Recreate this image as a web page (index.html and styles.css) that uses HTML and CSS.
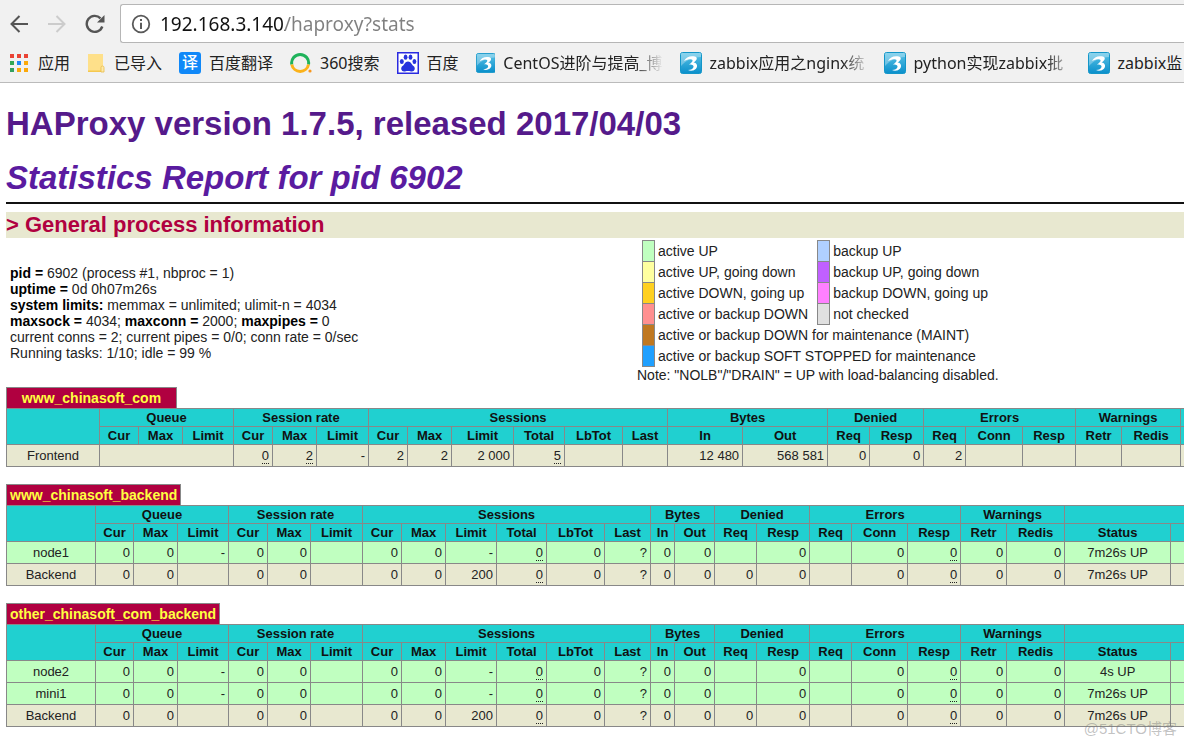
FILE: index.html
```html
<!DOCTYPE html>
<html lang="zh-CN">
<head>
<meta charset="utf-8">
<title>Statistics Report for HAProxy</title>
<link rel="stylesheet" href="styles.css">
</head>
<body>
<svg class="defs" width="0" height="0" aria-hidden="true">
  <defs>
    <linearGradient id="sky" x1="0" y1="0" x2="0" y2="1"><stop offset="0" stop-color="#5cc3e6"/><stop offset="1" stop-color="#0a8fcb"/></linearGradient>
    <symbol id="three" viewBox="0 0 22 22">
      <rect x="0.5" y="0.5" width="21" height="21" rx="2" fill="url(#sky)" stroke="#1496c8"/>
      <path d="M1 1h20v4C14 5 6 8 1 14z" fill="#fff" opacity=".3"/>
      <path d="M4 9C6 5 10 3.500 15 4.500c3 1 2 4-1.500 6 4.500.5 4.500 5 1.500 7-2 1.500-5 1.500-7 .5 3 0 5-1 5.500-3 .3-2-2-2.500-4.500-2.500 2-1.500 4-3 3.500-4.500C11.500 6.500 8 7 4 9z" fill="#fff"/>
    </symbol>
  </defs>
</svg>
<header class="chrome">
  <div class="toolbar">
    <button class="nav" type="button" aria-label="Back"><svg width="20" height="20" viewBox="0 0 20 20" fill="none" stroke="#555" stroke-width="2"><path d="M19 10H2.500M10.500 2l-8 8 8 8"/></svg></button>
    <button class="nav" type="button" aria-label="Forward"><svg width="20" height="20" viewBox="0 0 20 20" fill="none" stroke="#ccc" stroke-width="2"><path d="M1 10h16.500M9.500 2l8 8-8 8"/></svg></button>
    <button class="nav" type="button" aria-label="Reload"><svg width="20" height="20" viewBox="0 0 20 20" fill="none" stroke="#555" stroke-width="2.400"><path d="M17.300 12.500A8 8 0 1 1 15.500 4.300"/><path d="M19.500 1v7.500H12z" fill="#555" stroke="none"/></svg></button>
    <div class="omnibox">
      <svg width="20" height="20" viewBox="0 0 20 20"><circle cx="10" cy="10" r="8.300" fill="none" stroke="#5a5a5a" stroke-width="1.800"/><path d="M9 5h2v2H9zM9 8.800h2V15H9z" fill="#5a5a5a"/></svg>
      <input class="url" type="text" aria-label="Address" value="192.168.3.140/haproxy?stats">
    </div>
  </div>
  <nav class="bookmarks">
    <a class="mark" href="#"><svg width="21" height="22" viewBox="0 0 21 22"><path d="M1 2h4v4H1zM8 2h4v4H8zM15 2h4v4h-4z" fill="#ea4335"/><path d="M1 9h4v4H1z" fill="#34a853"/><path d="M8 9h4v4H8z" fill="#1e88f5"/><path d="M15 9h4v4h-4z" fill="#fba90a"/><path d="M1 16h4v4H1z" fill="#34a060"/><path d="M8 16h4v4H8zM15 16h4v4h-4z" fill="#fba90a"/></svg><span>应用</span></a>
    <a class="mark" href="#"><svg width="19" height="22" viewBox="0 0 19 22"><path d="M1 2h15v13h1v5H1z" fill="#fee08a"/><path d="M1 18.500h13V20H1z" fill="#f5c84f"/><path d="M14 20v-4.500a1.500 1.500 0 0 1 3 0V20z" fill="#fee9a8" stroke="#e9bd4c" stroke-width=".8"/></svg><span>已导入</span></a>
    <a class="mark" href="#"><span class="translate">译</span><span>百度翻译</span></a>
    <a class="mark" href="#"><svg width="22" height="22" viewBox="0 0 22 22" fill="none" stroke-width="3"><path d="M1.800 12.500A8.500 8.500 0 1 1 18.500 12.500" stroke="#1fb35b"/><path d="M1.800 12.500a8.500 8.500 0 0 0 16.700 0" stroke="#fbb21a"/><circle cx="20" cy="19" r="1.600" fill="#f8971d" stroke="none"/></svg><span>360搜索</span></a>
    <a class="mark" href="#"><svg width="22" height="22" viewBox="0 0 22 22"><rect x=".75" y=".75" width="20.500" height="20.500" fill="#fff" stroke="#2a2ae0" stroke-width="1.500"/><g fill="#2733dd"><ellipse cx="4.800" cy="9.500" rx="2" ry="2.500"/><ellipse cx="8.600" cy="5.200" rx="1.900" ry="2.600"/><ellipse cx="13.500" cy="5.200" rx="1.900" ry="2.600"/><ellipse cx="17.400" cy="9.500" rx="1.900" ry="2.500"/><path d="M11 9.500c3 0 3.500 3 5.500 4.500 2.500 2 1 5.500-1.500 5.500-1.500 0-2-.5-4-.5s-2.500.5-4 .5c-2.500 0-4-3.500-1.500-5.500C7.500 12.500 8 9.500 11 9.500z"/></g></svg><span>百度</span></a>
    <a class="mark wide" href="#"><svg width="22" height="22"><use href="#three"/></svg><span class="fade">CentOS进阶与提高_博</span></a>
    <a class="mark wide" href="#"><svg width="22" height="22"><use href="#three"/></svg><span class="fade">zabbix应用之nginx统</span></a>
    <a class="mark wide" href="#"><svg width="22" height="22"><use href="#three"/></svg><span class="fade">python实现zabbix批</span></a>
    <a class="mark wide" href="#"><svg width="22" height="22"><use href="#three"/></svg><span>zabbix监</span></a>
  </nav>
</header>
<main class="page">
  <h1><a href="#">HAProxy version 1.7.5, released 2017/04/03</a></h1>
  <h2><a href="#">Statistics Report for pid 6902</a></h2>
  <hr>
  <h3>&gt; General process information</h3>
  <section class="info">
    <p class="process">
      <b>pid = </b>6902 (process #1, nbproc = 1)<br>
      <b>uptime = </b>0d 0h07m26s<br>
      <b>system limits:</b> memmax = unlimited; ulimit-n = 4034<br>
      <b>maxsock = </b>4034; <b>maxconn = </b>2000; <b>maxpipes = </b>0<br>
      current conns = 2; current pipes = 0/0; conn rate = 0/sec<br>
      Running tasks: 1/10; idle = 99 %
    </p>
    <div class="legend">
      <table class="keys">
        <tr><td class="key up"></td><td>active UP</td><td class="key bup"></td><td>backup UP</td></tr>
        <tr><td class="key falling"></td><td>active UP, going down</td><td class="key bfalling"></td><td>backup UP, going down</td></tr>
        <tr><td class="key rising"></td><td>active DOWN, going up</td><td class="key brising"></td><td>backup DOWN, going up</td></tr>
        <tr><td class="key down"></td><td>active or backup DOWN</td><td class="key nocheck"></td><td>not checked</td></tr>
        <tr><td class="key maint"></td><td colspan="3">active or backup DOWN for maintenance (MAINT)</td></tr>
        <tr><td class="key stopped"></td><td colspan="3">active or backup SOFT STOPPED for maintenance</td></tr>
      </table>
      <p class="note">Note: "NOLB"/"DRAIN" = UP with load-balancing disabled.</p>
    </div>
  </section>

  <table class="stats front">
    <caption><a href="#">www_chinasoft_com</a></caption>
    <colgroup><col class="w93"><col class="w39"><col class="w44"><col class="w51"><col class="w39"><col class="w44"><col class="w52"><col class="w39"><col class="w44"><col class="w62"><col class="w51"><col class="w58"><col class="w45"><col class="w75"><col class="w85"><col class="w42"><col class="w54"><col class="w42"><col class="w57"><col class="w53"><col class="w46"><col class="w59"><col></colgroup>
    <thead>
      <tr><th rowspan="2"></th><th colspan="3">Queue</th><th colspan="3">Session rate</th><th colspan="6">Sessions</th><th colspan="2">Bytes</th><th colspan="2">Denied</th><th colspan="3">Errors</th><th colspan="2">Warnings</th><th></th></tr>
      <tr><th>Cur</th><th>Max</th><th>Limit</th><th>Cur</th><th>Max</th><th>Limit</th><th>Cur</th><th>Max</th><th>Limit</th><th>Total</th><th>LbTot</th><th>Last</th><th>In</th><th>Out</th><th>Req</th><th>Resp</th><th>Req</th><th>Conn</th><th>Resp</th><th>Retr</th><th>Redis</th><th></th></tr>
    </thead>
    <tbody>
      <tr class="total"><td class="ac">Frontend</td><td colspan="3"></td><td><u>0</u></td><td><u>2</u></td><td>-</td><td>2</td><td>2</td><td>2 000</td><td><u>5</u></td><td></td><td></td><td>12 480</td><td>568 581</td><td>0</td><td>0</td><td>2</td><td></td><td></td><td></td><td></td><td></td></tr>
    </tbody>
  </table>

  <table class="stats">
    <caption><a href="#">www_chinasoft_backend</a></caption>
    <colgroup><col class="w89"><col class="w38"><col class="w44"><col class="w51"><col class="w39"><col class="w43"><col class="w52"><col class="w39"><col class="w44"><col class="w51"><col class="w50"><col class="w58"><col class="w46"><col class="w24"><col class="w40"><col class="w42"><col class="w53"><col class="w42"><col class="w56"><col class="w53"><col class="w46"><col class="w58"><col class="w106"><col></colgroup>
    <thead>
      <tr><th rowspan="2"></th><th colspan="3">Queue</th><th colspan="3">Session rate</th><th colspan="6">Sessions</th><th colspan="2">Bytes</th><th colspan="2">Denied</th><th colspan="3">Errors</th><th colspan="2">Warnings</th><th colspan="2"></th></tr>
      <tr><th>Cur</th><th>Max</th><th>Limit</th><th>Cur</th><th>Max</th><th>Limit</th><th>Cur</th><th>Max</th><th>Limit</th><th>Total</th><th>LbTot</th><th>Last</th><th>In</th><th>Out</th><th>Req</th><th>Resp</th><th>Req</th><th>Conn</th><th>Resp</th><th>Retr</th><th>Redis</th><th>Status</th><th></th></tr>
    </thead>
    <tbody>
      <tr class="active"><td class="ac">node1</td><td>0</td><td>0</td><td>-</td><td>0</td><td>0</td><td></td><td>0</td><td>0</td><td>-</td><td><u>0</u></td><td>0</td><td>?</td><td>0</td><td>0</td><td></td><td>0</td><td></td><td>0</td><td><u>0</u></td><td>0</td><td>0</td><td class="ac">7m26s UP</td><td></td></tr>
      <tr class="total"><td class="ac">Backend</td><td>0</td><td>0</td><td></td><td>0</td><td>0</td><td></td><td>0</td><td>0</td><td>200</td><td><u>0</u></td><td>0</td><td>?</td><td>0</td><td>0</td><td>0</td><td>0</td><td></td><td>0</td><td><u>0</u></td><td>0</td><td>0</td><td class="ac">7m26s UP</td><td></td></tr>
    </tbody>
  </table>

  <table class="stats">
    <caption><a href="#">other_chinasoft_com_backend</a></caption>
    <colgroup><col class="w89"><col class="w38"><col class="w44"><col class="w51"><col class="w39"><col class="w43"><col class="w52"><col class="w39"><col class="w44"><col class="w51"><col class="w50"><col class="w58"><col class="w46"><col class="w24"><col class="w40"><col class="w42"><col class="w53"><col class="w42"><col class="w56"><col class="w53"><col class="w46"><col class="w58"><col class="w106"><col></colgroup>
    <thead>
      <tr><th rowspan="2"></th><th colspan="3">Queue</th><th colspan="3">Session rate</th><th colspan="6">Sessions</th><th colspan="2">Bytes</th><th colspan="2">Denied</th><th colspan="3">Errors</th><th colspan="2">Warnings</th><th colspan="2"></th></tr>
      <tr><th>Cur</th><th>Max</th><th>Limit</th><th>Cur</th><th>Max</th><th>Limit</th><th>Cur</th><th>Max</th><th>Limit</th><th>Total</th><th>LbTot</th><th>Last</th><th>In</th><th>Out</th><th>Req</th><th>Resp</th><th>Req</th><th>Conn</th><th>Resp</th><th>Retr</th><th>Redis</th><th>Status</th><th></th></tr>
    </thead>
    <tbody>
      <tr class="active"><td class="ac">node2</td><td>0</td><td>0</td><td>-</td><td>0</td><td>0</td><td></td><td>0</td><td>0</td><td>-</td><td><u>0</u></td><td>0</td><td>?</td><td>0</td><td>0</td><td></td><td>0</td><td></td><td>0</td><td><u>0</u></td><td>0</td><td>0</td><td class="ac">4s UP</td><td></td></tr>
      <tr class="active"><td class="ac">mini1</td><td>0</td><td>0</td><td>-</td><td>0</td><td>0</td><td></td><td>0</td><td>0</td><td>-</td><td><u>0</u></td><td>0</td><td>?</td><td>0</td><td>0</td><td></td><td>0</td><td></td><td>0</td><td><u>0</u></td><td>0</td><td>0</td><td class="ac">7m26s UP</td><td></td></tr>
      <tr class="total"><td class="ac">Backend</td><td>0</td><td>0</td><td></td><td>0</td><td>0</td><td></td><td>0</td><td>0</td><td>200</td><td><u>0</u></td><td>0</td><td>?</td><td>0</td><td>0</td><td>0</td><td>0</td><td></td><td>0</td><td><u>0</u></td><td>0</td><td>0</td><td class="ac">7m26s UP</td><td></td></tr>
    </tbody>
  </table>
  <span class="watermark">@51CTO博客</span>
</main>
</body>
</html>
```
FILE: styles.css
```css
* { box-sizing: border-box; }
body {
  margin: 0;
  background: #fff;
  color: #222;
  font: 13px/16px "Liberation Sans", Arial, "Noto Sans CJK SC", sans-serif;
}
.defs { position: absolute; }

/* Browser chrome */
.chrome {
  background: #f1f1f1;
  border-bottom: 1px solid #bbb;
  padding: 4px 0 7px;
  overflow: hidden;
  font-family: "Noto Sans", "Noto Sans CJK SC", sans-serif;
}
.toolbar { display: flex; align-items: center; padding-left: 9px; }
.nav {
  display: flex;
  flex: none;
  margin: 0 18px 0 0;
  padding: 0;
  border: 0;
  background: none;
}
.nav + .nav + .nav { margin-right: 15px; }
.omnibox {
  display: flex;
  flex: 1;
  align-items: center;
  gap: 9px;
  height: 39px;
  padding-left: 10px;
  background: #fff;
  border: 1px solid #b6b6b6;
  border-right: 0;
  border-radius: 3px 0 0 3px;
}
.url {
  flex: 1;
  min-width: 0;
  padding: 0;
  border: 0;
  outline: 0;
  font: 19px/28px "Noto Sans", sans-serif;
  color: transparent;
  background: linear-gradient(to right, #111 125px, #808080 125px);
  -webkit-background-clip: text;
  background-clip: text;
}
.bookmarks { display: flex; gap: 17px; padding: 8px 0 0 9px; }
.mark {
  display: flex;
  flex: none;
  align-items: center;
  gap: 8px;
  color: #222;
  font-size: 16px;
  line-height: 24px;
  text-decoration: none;
  white-space: nowrap;
}
.wide { width: 187px; }
.fade {
  -webkit-mask-image: linear-gradient(to right, #000 132px, transparent 160px);
  mask-image: linear-gradient(to right, #000 132px, transparent 160px);
}
.translate {
  width: 22px;
  height: 22px;
  border-radius: 3px;
  background: #1088f8;
  color: #fff;
  font-size: 16px;
  font-weight: 500;
  line-height: 21px;
  text-align: center;
}

/* Report */
.page { position: relative; padding: 18px 0 10px 6px; overflow: hidden; }
h1, h2, h3 { margin: 0; font-weight: bold; }
h1, h2 { font-size: 33px; line-height: 46px; }
h1 a { color: #551a8b; text-decoration: none; }
h2 { margin-top: 8px; font-style: italic; }
h2 a { color: #5a1ba0; text-decoration: none; }
hr { margin: 1px 0 8px; border: 0; border-top: 2px solid #111; }
h3 { background: #e8e8d0; color: #b00040; font-size: 22px; line-height: 26px; }

.info {
  display: grid;
  grid-template-columns: 627px 1fr;
  padding: 2px 0 4px;
  font-size: 14px;
}
.process { margin: 25px 4px 0; }
.process b { color: #000; }
.legend { padding-left: 4px; }
.keys { margin-left: 5px; border-collapse: collapse; }
.keys td { height: 21px; padding: 0 9px 0 3px; }
.keys .key { width: 12px; padding: 0; border: 1px solid #888; }
.key.up { background: #c0ffc0; }
.key.bup { background: #b0d0ff; }
.key.falling { background: #ffffa0; }
.key.bfalling { background: #c060ff; }
.key.rising { background: #ffd020; }
.key.brising { background: #ff80ff; }
.key.down { background: #ff9090; }
.key.nocheck { background: #e0e0e0; }
.key.maint { background: #c07820; }
.key.stopped { background: #20a0ff; }
.note { margin: 0; }

.stats {
  width: calc(100% + 40px);
  margin-bottom: 17px;
  table-layout: fixed;
  border-collapse: collapse;
}
.stats caption { text-align: left; }
.stats caption a {
  display: inline-block;
  padding: 0 3px;
  border: 1px solid #888;
  border-bottom: 0;
  background: #b00040;
  color: #ffff40;
  font-size: 14px;
  font-weight: bold;
  line-height: 20px;
  text-align: center;
  text-decoration: none;
  vertical-align: top;
}
.front caption a { min-width: 171px; }
.stats th, .stats td { padding: 0; border: 1px solid #888; white-space: nowrap; }
.stats th { height: 18px; background: #20d0d0; color: #111; }
.stats td { height: 22px; padding-right: 3px; text-align: right; }
.stats td.ac { padding: 0; text-align: center; }
.stats u { text-decoration: none; border-bottom: 1px dotted #222; }
.total { background: #e8e8d0; }
.active { background: #c0ffc0; }

.w24 { width: 24px; }
.w38 { width: 38px; }
.w39 { width: 39px; }
.w40 { width: 40px; }
.w42 { width: 42px; }
.w43 { width: 43px; }
.w44 { width: 44px; }
.w45 { width: 45px; }
.w46 { width: 46px; }
.w50 { width: 50px; }
.w51 { width: 51px; }
.w52 { width: 52px; }
.w53 { width: 53px; }
.w54 { width: 54px; }
.w56 { width: 56px; }
.w57 { width: 57px; }
.w58 { width: 58px; }
.w59 { width: 59px; }
.w62 { width: 62px; }
.w75 { width: 75px; }
.w85 { width: 85px; }
.w89 { width: 89px; }
.w93 { width: 93px; }
.w106 { width: 106px; }

.watermark {
  position: absolute;
  right: 7px;
  bottom: 17px;
  color: rgba(120, 120, 120, 0.45);
  font-size: 15px;
}
```
